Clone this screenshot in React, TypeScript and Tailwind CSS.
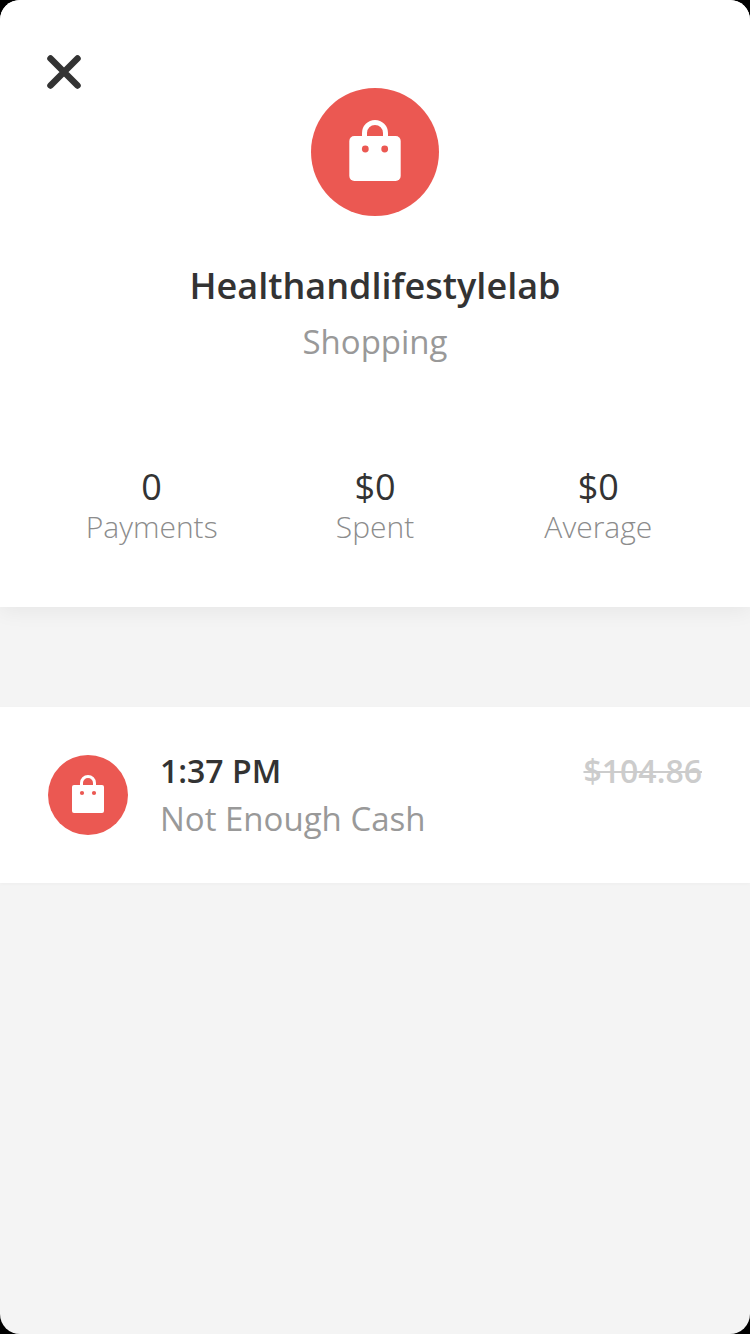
type BadgeProps = { large?: boolean };

function ShoppingBadge({ large = false }: BadgeProps) {
  return (
    <span
      className={
        large
          ? "flex size-32 items-center justify-center rounded-full bg-[#eb5852]"
          : "flex size-20 shrink-0 items-center justify-center rounded-full bg-[#eb5852]"
      }
    >
      {large ? (
        <svg className="size-16" viewBox="0 0 64 64" fill="none" aria-hidden="true">
          <path d="M21.500 18v-5a10.500 10.500 0 0 1 21 0V18" stroke="white" strokeWidth="5" />
          <rect x="6.300" y="16" width="51.400" height="45" rx="5" fill="white" />
          <circle cx="22.300" cy="29" r="3.400" fill="#eb5852" />
          <circle cx="41.700" cy="29" r="3.400" fill="#eb5852" />
        </svg>
      ) : (
        <svg className="size-10" viewBox="0 0 40 40" fill="none" aria-hidden="true">
          <path d="M13.500 11V8a6.500 6.500 0 0 1 13 0V11" stroke="white" strokeWidth="3" />
          <rect x="4" y="10" width="32" height="28" rx="2" fill="white" />
          <circle cx="14" cy="18" r="2.100" fill="#eb5852" />
          <circle cx="26" cy="18" r="2.100" fill="#eb5852" />
        </svg>
      )}
    </span>
  );
}

const stats = [
  { label: "Payments", value: "0" },
  { label: "Spent", value: "$0" },
  { label: "Average", value: "$0" },
];

export default function App() {
  return (
    <div className="min-h-screen bg-black font-['Open_Sans',sans-serif] text-[#333333]">
      <main className="min-h-screen overflow-hidden rounded-[20px] bg-[#f4f4f4]">
        <header className="bg-white pt-14 pb-[60px] shadow-[0_4px_20px_rgba(0,0,0,0.06)]">
          <button type="button" aria-label="Close" className="ml-12 block size-8">
            <svg className="size-8 overflow-visible" viewBox="0 0 32 32" fill="none" aria-hidden="true">
              <path d="M2.500 2.500l27 27M29.500 2.500l-27 27" stroke="#333333" strokeWidth="6.500" strokeLinecap="round" />
            </svg>
          </button>
          <div className="flex flex-col items-center">
            <ShoppingBadge large />
            <h1 className="mt-[46px] text-[36px] leading-[48px] font-semibold">Healthandlifestylelab</h1>
            <p className="mt-3 text-[33px] leading-10 text-[#999999]">Shopping</p>
          </div>
          <dl className="mt-[105px] grid grid-cols-3 px-10 text-center">
            {stats.map((stat) => (
              <div key={stat.label} className="flex flex-col-reverse">
                <dt className="text-[30px] leading-10 font-light text-[#8c8c8c]">{stat.label}</dt>
                <dd className="text-[36px] leading-10">{stat.value}</dd>
              </div>
            ))}
          </dl>
        </header>
        <ul className="mt-25 bg-white shadow-[0_1px_4px_rgba(0,0,0,0.03)]">
          <li className="flex items-center gap-8 px-12 py-10">
            <ShoppingBadge />
            <div className="flex-1">
              <div className="flex items-center justify-between text-[32px] leading-12 font-semibold">
                <span>1:37 PM</span>
                <s className="text-[#cccccc] decoration-2">$104.86</s>
              </div>
              <p className="text-[33px] leading-12 text-[#999999]">Not Enough Cash</p>
            </div>
          </li>
        </ul>
      </main>
    </div>
  );
}
